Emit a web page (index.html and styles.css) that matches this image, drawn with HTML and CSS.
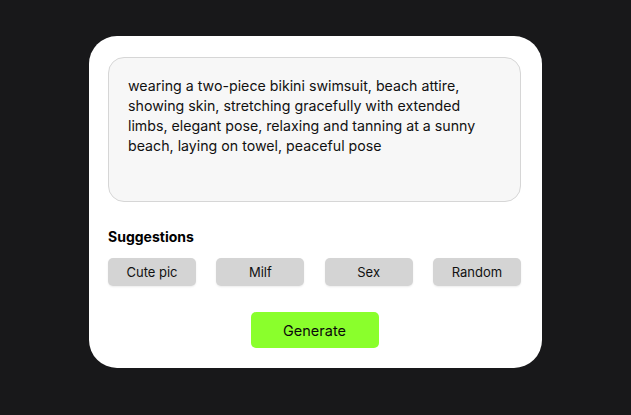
FILE: index.html
```html
<!DOCTYPE html>
<html>
<head>
<meta charset="utf-8">
<link rel="stylesheet" href="styles.css">
</head>
<body>
<div class="page">
  <div class="card">
    <div class="prompt">wearing a two-piece bikini swimsuit, beach attire, showing skin, stretching gracefully with extended limbs, elegant pose, relaxing and tanning at a sunny beach, laying on towel, peaceful pose</div>
    <div class="label">Suggestions</div>
    <div class="chips">
      <div class="chip">Cute pic</div>
      <div class="chip">Milf</div>
      <div class="chip">Sex</div>
      <div class="chip">Random</div>
    </div>
    <div class="actions">
      <div class="generate">Generate</div>
    </div>
  </div>
</div>
</body>
</html>
```
FILE: styles.css
```css
html, body {
  margin: 0;
  padding: 0;
  background: #18181a;
  font-family: Inter, "Liberation Sans", sans-serif;
}
.page {
  width: 631px;
  height: 415px;
  padding-top: 36px;
  padding-left: 89px;
  box-sizing: border-box;
}
.card {
  width: 453px;
  height: 332px;
  box-sizing: border-box;
  background: #ffffff;
  border-radius: 28px;
  padding: 21px 21px 0 19px;
  display: flex;
  flex-direction: column;
}
.prompt {
  height: 145px;
  box-sizing: border-box;
  background: #f7f7f7;
  border: 1px solid #d6d6d6;
  border-radius: 16px;
  padding: 18px 28px 0 19px;
  font-size: 14.2px;
  line-height: 20px;
  color: #111111;
}
.label {
  margin-top: 27px;
  font-size: 14px;
  font-weight: 700;
  line-height: 16px;
  color: #000000;
}
.chips {
  margin-top: 13px;
  display: flex;
  justify-content: space-between;
}
.chip {
  width: 88px;
  height: 28px;
  background: #d4d4d4;
  border-radius: 5px;
  box-shadow: 0 1px 2px rgba(0, 0, 0, 0.08);
  display: flex;
  align-items: center;
  justify-content: center;
  font-size: 13px;
  color: #111111;
}
.actions {
  margin-top: 26px;
  display: flex;
  justify-content: center;
}
.generate {
  width: 128px;
  height: 36px;
  background: #8aff2c;
  border-radius: 5px;
  display: flex;
  align-items: center;
  justify-content: center;
  font-size: 14.5px;
  color: #0a0a0a;
}
```
